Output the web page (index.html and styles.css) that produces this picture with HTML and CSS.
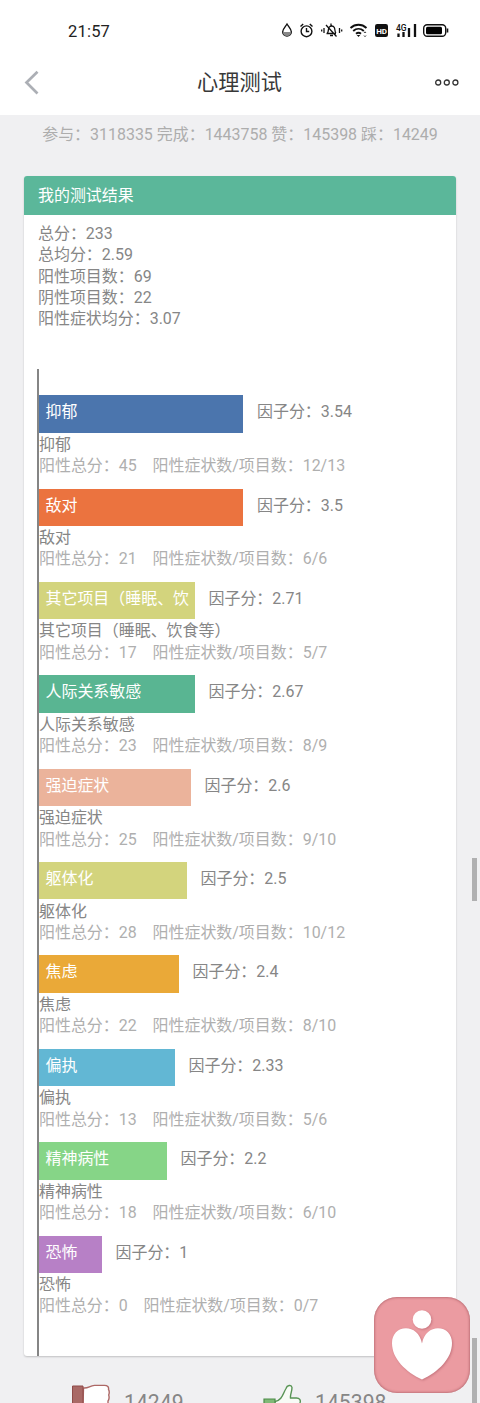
FILE: index.html
```html
<!DOCTYPE html>
<html lang="zh-CN">
<head>
<meta charset="utf-8">
<title>心理测试</title>
<link rel="stylesheet" href="styles.css">
</head>
<body>
<div class="screen">
  <header class="top">
    <div class="status">
      <span class="clock">21:57</span>
      <svg class="status-icons" width="172" height="20" viewBox="0 0 172 20" fill="none" stroke="#111" stroke-width="1.4">
        <path d="M9 4C7.5 6.5 4.700 9 4.700 11.700a4.300 4.300 0 0 0 8.600 0C13.300 9 10.500 6.500 9 4z"/>
        <path d="M5 12h8a4 4 0 0 1-8 0z" fill="#888" stroke="none"/>
        <circle cx="28.500" cy="11.300" r="5.400"/><path d="M28.500 8v3.500h2.700M22.500 6.500l2.700-2.500M34.500 6.500l-2.700-2.500"/>
        <path d="M48.500 13.500h9.500M49.500 13c1.200-2 .6-4 1.500-5.500 1.200-2 4.300-2 5.300 0 .8 1.600.3 3.500 1.500 5.500M53 3.500v2M52 15.500h3M48 5l10.500 11.500M46 8v5M43.700 9.500v2M61.500 8v5M63.700 9.500v2" stroke-width="1.300"/>
        <path d="M72.500 8c4.700-4.300 11.300-4.300 16 0M75.200 11c3.200-2.900 7.400-2.900 10.600 0M78 13.700c1.700-1.400 3.300-1.400 5 0" stroke-width="1.900"/>
        <path d="M80.500 17l-1.800-2h3.600z" fill="#111" stroke="none"/>
        <path d="M86 13l1-1.200 1 1.200M86 15.500l1 1.200 1-1.200" stroke-width=".8"/>
        <rect x="97" y="4" width="13" height="13" rx="2.200" fill="#111" stroke="none"/>
        <text x="98.200" y="13.600" class="hd">HD</text>
        <text x="118" y="10.500" class="net">4G</text>
        <path d="M120.500 13.500v3.500M125.500 12v5M131 8v9M137 4v13" stroke-width="2.300"/>
        <rect x="145.700" y="4.700" width="22" height="11.600" rx="3.500"/>
        <rect x="148" y="6.800" width="16" height="7.400" rx="1.500" fill="#000" stroke="none"/>
        <path d="M169.500 8.500v4" stroke-width="1.600"/>
      </svg>
    </div>
    <nav class="nav">
      <svg class="back" width="16" height="26" viewBox="0 0 16 26"><path d="M13.500 1.700L2.500 12.500l11 11" fill="none" stroke="#acafb5" stroke-width="2.700"/></svg>
      <h1 class="title">心理测试</h1>
      <svg class="more" width="26" height="8" viewBox="0 0 26 8" fill="none" stroke="#333" stroke-width="1.300"><circle cx="4.200" cy="3.500" r="2.500"/><circle cx="12.800" cy="3.500" r="2.500"/><circle cx="21.400" cy="3.500" r="2.500"/></svg>
    </nav>
  </header>
  <main>
    <p class="totals">参与：3118335 完成：1443758 赞：145398 踩：14249</p>
    <section class="card">
      <h2 class="card-head">我的测试结果</h2>
      <div class="summary">
        <p>总分：233</p><p>总均分：2.59</p><p>阳性项目数：69</p><p>阴性项目数：22</p><p>阳性症状均分：3.07</p>
      </div>
      <div class="chart">
        <div class="factor"><div class="line"><div class="bar blue" style="width:204.500px"><span>抑郁</span></div><b>因子分：3.54</b></div><p>抑郁</p><p class="detail">阳性总分：45&nbsp;&nbsp;&nbsp;&nbsp;阳性症状数/项目数：12/13</p></div>
        <div class="factor"><div class="line"><div class="bar orange" style="width:204.500px"><span>敌对</span></div><b>因子分：3.5</b></div><p>敌对</p><p class="detail">阳性总分：21&nbsp;&nbsp;&nbsp;&nbsp;阳性症状数/项目数：6/6</p></div>
        <div class="factor"><div class="line"><div class="bar olive" style="width:156px"><span>其它项目（睡眠、饮</span></div><b>因子分：2.71</b></div><p>其它项目（睡眠、饮食等）</p><p class="detail">阳性总分：17&nbsp;&nbsp;&nbsp;&nbsp;阳性症状数/项目数：5/7</p></div>
        <div class="factor"><div class="line"><div class="bar green" style="width:156px"><span>人际关系敏感</span></div><b>因子分：2.67</b></div><p>人际关系敏感</p><p class="detail">阳性总分：23&nbsp;&nbsp;&nbsp;&nbsp;阳性症状数/项目数：8/9</p></div>
        <div class="factor"><div class="line"><div class="bar peach" style="width:152px"><span>强迫症状</span></div><b>因子分：2.6</b></div><p>强迫症状</p><p class="detail">阳性总分：25&nbsp;&nbsp;&nbsp;&nbsp;阳性症状数/项目数：9/10</p></div>
        <div class="factor"><div class="line"><div class="bar olive" style="width:148px"><span>躯体化</span></div><b>因子分：2.5</b></div><p>躯体化</p><p class="detail">阳性总分：28&nbsp;&nbsp;&nbsp;&nbsp;阳性症状数/项目数：10/12</p></div>
        <div class="factor"><div class="line"><div class="bar amber" style="width:140px"><span>焦虑</span></div><b>因子分：2.4</b></div><p>焦虑</p><p class="detail">阳性总分：22&nbsp;&nbsp;&nbsp;&nbsp;阳性症状数/项目数：8/10</p></div>
        <div class="factor"><div class="line"><div class="bar sky" style="width:136px"><span>偏执</span></div><b>因子分：2.33</b></div><p>偏执</p><p class="detail">阳性总分：13&nbsp;&nbsp;&nbsp;&nbsp;阳性症状数/项目数：5/6</p></div>
        <div class="factor"><div class="line"><div class="bar lime" style="width:128px"><span>精神病性</span></div><b>因子分：2.2</b></div><p>精神病性</p><p class="detail">阳性总分：18&nbsp;&nbsp;&nbsp;&nbsp;阳性症状数/项目数：6/10</p></div>
        <div class="factor"><div class="line"><div class="bar violet" style="width:63px"><span>恐怖</span></div><b>因子分：1</b></div><p>恐怖</p><p class="detail">阳性总分：0&nbsp;&nbsp;&nbsp;&nbsp;阳性症状数/项目数：0/7</p></div>
      </div>
    </section>
    <div class="votes">
      <div class="vote">
        <svg width="40" height="36" viewBox="0 0 40 36"><path d="M12.500 4c5 .5 6-2.300 11-2.600h10c3 0 4.500 1.500 4 4 1.200 2 .8 4 .2 5.600.8 2 .3 5-.7 6v5H12z" fill="#fff" stroke="#ad6866" stroke-width="1.400"/><path d="M1.500 2H12v22H1.500z" fill="#a96966" stroke="#8f4b49"/></svg>
        <span>14249</span>
      </div>
      <div class="vote">
        <svg width="40" height="36" viewBox="0 0 40 36"><path d="M13 17.500c7-1 8-8 11-13 1-3.500 5.500-4 6-1 0 4-2 7-1.500 10.500h6c3 0 4.500 2 3.500 5v12H13z" fill="#f8fbf6" stroke="#579354" stroke-width="1.400"/><path d="M2 15h11v18H2z" fill="#80b977" stroke="#4d8b48" stroke-width="1.200"/></svg>
        <span>145398</span>
      </div>
    </div>
  </main>
  <i class="thumb thumb-mid"></i>
  <i class="thumb thumb-low"></i>
  <div class="float">
    <svg width="96" height="96" viewBox="0 0 96 96" fill="#fff"><circle cx="48" cy="22.500" r="9.300"/><path d="M48 46.500C46 36 39 31.300 32 31.300c-8 0-14 6-14 14.700C18 62 32 75 48 82.500 64 75 78 62 78 46c0-8.700-6-14.700-14-14.700-7 0-14 4.700-16 15.200z"/></svg>
  </div>
</div>
</body>
</html>
```
FILE: styles.css
```css
* { box-sizing: border-box; }
body { margin: 0; background: #f0f0f2; font: 15.960px/21.350px Roboto, "Noto Sans CJK SC", sans-serif; font-weight: 400; color: #868686; }
p, h1, h2 { margin: 0; font-weight: inherit; }
b { font-weight: inherit; }
.screen { position: relative; width: 480px; height: 1403px; overflow: hidden; }
.top { height: 115px; background: #fff; color: #222; }
.status { height: 55px; padding: 20px 30px 0 68px; display: flex; justify-content: space-between; align-items: flex-start; }
.clock { font-size: 16.5px; line-height: 23px; letter-spacing: .2px; }
.hd { font: 700 8px Roboto, sans-serif; fill: #fff; stroke: none; }
.net { font: 500 8.500px Roboto, sans-serif; fill: #111; stroke: none; }
.nav { height: 55px; padding: 0 20px 0 24px; display: flex; align-items: center; justify-content: space-between; }
.title { font-size: 21.200px; line-height: 30px; color: #383838; padding: 1px 0 0 5px; }
.totals { height: 60.500px; padding-top: 9px; text-align: center; color: #adadad; white-space: nowrap; }
.card { margin: 0 24px; height: 1180.500px; background: #fff; border-radius: 3px; box-shadow: 0 1px 2px #0003; overflow: hidden; }
.card-head { height: 39.500px; padding: 9.500px 14px; background: #5bb79a; color: #fff; font-size: inherit; }
.summary { height: 153.500px; padding: 8px 14px 0; }
.chart { margin-left: 13px; height: 988px; padding-top: 26.700px; border-left: 2px solid #858585; }
.factor { height: 93.380px; white-space: nowrap; }
.line { display: flex; gap: 14px; height: 38.500px; }
.line b { padding-top: 6px; }
.bar { height: 37.350px; margin-left: -.5px; padding: 6px 0 0 7px; color: #fff; flex: none; }
.bar span { display: block; }
.detail { color: #afafaf; }
.blue { background: #4b75ad; }
.orange { background: #eb733f; }
.olive { background: #d3d47d; }
.green { background: #59b592; }
.peach { background: #ebb39b; }
.amber { background: #eaa938; }
.sky { background: #62b7d4; }
.lime { background: #86d587; }
.violet { background: #b780c6; }
.votes { display: flex; padding: 28px 0 0 71px; }
.vote { display: flex; width: 191px; gap: 13px; font-size: 21.200px; }
.vote span { padding-top: 7px; line-height: 24px; }
.thumb { position: absolute; left: 472px; width: 5px; background: #b0b0b1; }
.thumb-mid { top: 858px; height: 43px; }
.thumb-low { top: 1338px; height: 65px; }
.float { position: absolute; left: 374px; top: 1297px; width: 96px; height: 96px; border-radius: 23px; background: #eb9ba1; box-shadow: inset 0 0 3px #994d55; }
.float svg { display: block; filter: drop-shadow(1px 1px 1px #a4525d80); }
```
